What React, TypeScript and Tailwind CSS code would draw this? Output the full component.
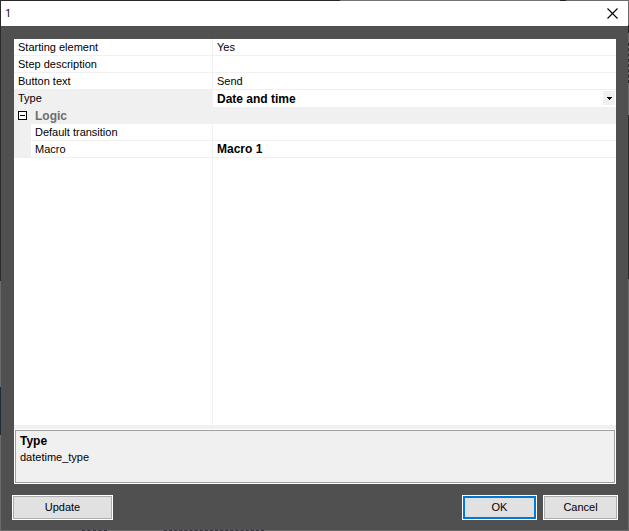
import { useState } from "react";

const rowLine = "border-b border-[#f0f0f0]";
const valueText =
  "block h-full w-full min-w-0 appearance-none rounded-none border-0 bg-white py-0 pl-1 text-black outline-none";
const boldText = "text-[12px] font-bold";

type RowProps = {
  id: string;
  label: string;
  value: string;
  bold?: boolean;
  nested?: boolean;
};

function PropertyRow({ id, label, value, bold, nested }: RowProps) {
  return (
    <div className="flex h-[17px]">
      {nested && <div className="w-[17px] shrink-0 bg-[#f0f0f0]" />}
      <label
        htmlFor={id}
        className={`${rowLine} ${nested ? "w-[181px]" : "w-[198px]"} shrink-0 pl-1 leading-4`}
      >
        {label}
      </label>
      <div className={`${rowLine} min-w-0 flex-1 border-l`}>
        <input
          id={id}
          type="text"
          defaultValue={value}
          className={`${valueText} ${bold ? boldText : "text-[11px]"}`}
        />
      </div>
    </div>
  );
}

function TypeRow() {
  return (
    <div className="flex h-[17px]">
      <label htmlFor="type" className="w-[199px] shrink-0 bg-[#f0f0f0] pl-1 leading-4">
        Type
      </label>
      <div className="relative min-w-0 flex-1 bg-white">
        <select id="type" className={`${valueText} ${boldText} leading-4`}>
          <option>Date and time</option>
        </select>
        <span className="pointer-events-none absolute top-px right-px flex h-3.5 w-3 items-center justify-center bg-[#f0f0f0]">
          <svg width="5" height="3" viewBox="0 0 5 3" shapeRendering="crispEdges" aria-hidden="true">
            <path d="M0 0h5v1H4v1H3v1H2V2H1V1H0z" fill="#000" />
          </svg>
        </span>
      </div>
    </div>
  );
}

const button = "h-[23px] border bg-[#e1e1e1] text-[11px] text-black outline outline-white";

export default function App() {
  const [open, setOpen] = useState(true);

  return (
    <div className="flex min-h-screen flex-col bg-[#6b6b6b] font-['Liberation_Sans',Arial,sans-serif] text-[11px] text-black">
      <div className="flex h-px">
        <div className="w-[54%] bg-[#2d282b]" />
        <div className="w-[35%] bg-[#737373]" />
        <div className="w-[1%] bg-[#222222]" />
      </div>
      <div className="flex flex-1">
        <div className="flex w-px flex-col">
          <div className="h-[53%] bg-[#2b2b2b]" />
          <div className="h-[20%] bg-[#6b6b6b]" />
          <div className="h-[9%] bg-[#1e2a38]" />
        </div>
        <div role="dialog" aria-label="1" className="flex min-w-0 flex-1 flex-col bg-[#505050]">
          <header className="flex h-[25px] items-center justify-between bg-white pr-2.5 pl-1">
            <h1 className="font-['Open_Sans','Noto_Sans',sans-serif] text-[11px]">1</h1>
            <button type="button" aria-label="Close">
              <svg width="11" height="11" viewBox="0 0 11 11" aria-hidden="true">
                <path d="M.5.5l10 10M10.5.5l-10 10" stroke="#000" strokeWidth="1.1" />
              </svg>
            </button>
          </header>

          <main className="mt-[13px] mr-3 ml-[13px] flex flex-1 flex-col bg-[#f0f0f0]">
            <div className="flex flex-1 flex-col bg-white">
              <PropertyRow id="start" label="Starting element" value="Yes" />
              <PropertyRow id="step" label="Step description" value="" />
              <PropertyRow id="text" label="Button text" value="Send" />
              <TypeRow />
              <button
                type="button"
                aria-expanded={open}
                onClick={() => setOpen(!open)}
                className={`flex h-[17px] items-center bg-[#f0f0f0] pl-1 text-[#6d6d6d] ${boldText}`}
              >
                <svg width="9" height="9" viewBox="0 0 9 9" shapeRendering="crispEdges" aria-hidden="true">
                  <rect x=".5" y=".5" width="8" height="8" fill="#fff" stroke="#000" />
                  <path d={open ? "M2 4.5h5" : "M2 4.5h5M4.5 2v5"} stroke="#000" />
                </svg>
                <span className="pl-2">Logic</span>
              </button>
              {open && (
                <>
                  <PropertyRow id="transition" label="Default transition" value="" nested />
                  <PropertyRow id="macro" label="Macro" value="Macro 1" bold nested />
                </>
              )}
              <div className="ml-[198px] flex-1 border-l border-[#f0f0f0]" />
            </div>
            <section className="mt-1 h-[55px] border border-white">
              <div className="h-full border border-[#a0a0a0] pt-0.5 pl-1">
                <h2 className={`leading-4 ${boldText}`}>Type</h2>
                <p className="leading-4">datetime_type</p>
              </div>
            </section>
          </main>

          <footer className="flex gap-2 pt-3 pr-[11px] pb-[11px] pl-3">
            <button type="button" className={`${button} w-[99px] border-[#adadad]`}>
              Update
            </button>
            <button type="button" className={`${button} ml-auto w-[73px] border-2 border-[#0078d7]`}>
              OK
            </button>
            <button type="button" className={`${button} w-[73px] border-[#adadad]`}>
              Cancel
            </button>
          </footer>
        </div>
        <div className="flex w-px flex-col">
          <div className="mt-6 h-2 bg-[#222222]" />
          <div className="mt-2.5 h-10 border-r border-dashed border-[#2b2b2b]" />
          <div className="mt-8 h-[31%] bg-[#2b2b2b]" />
        </div>
      </div>
      <div className="flex h-px">
        <div className="ml-[13%] w-[4%] border-t border-dashed border-[#33303a]" />
        <div className="ml-[9%] w-[16%] border-t border-dashed border-[#33303a]" />
      </div>
    </div>
  );
}
